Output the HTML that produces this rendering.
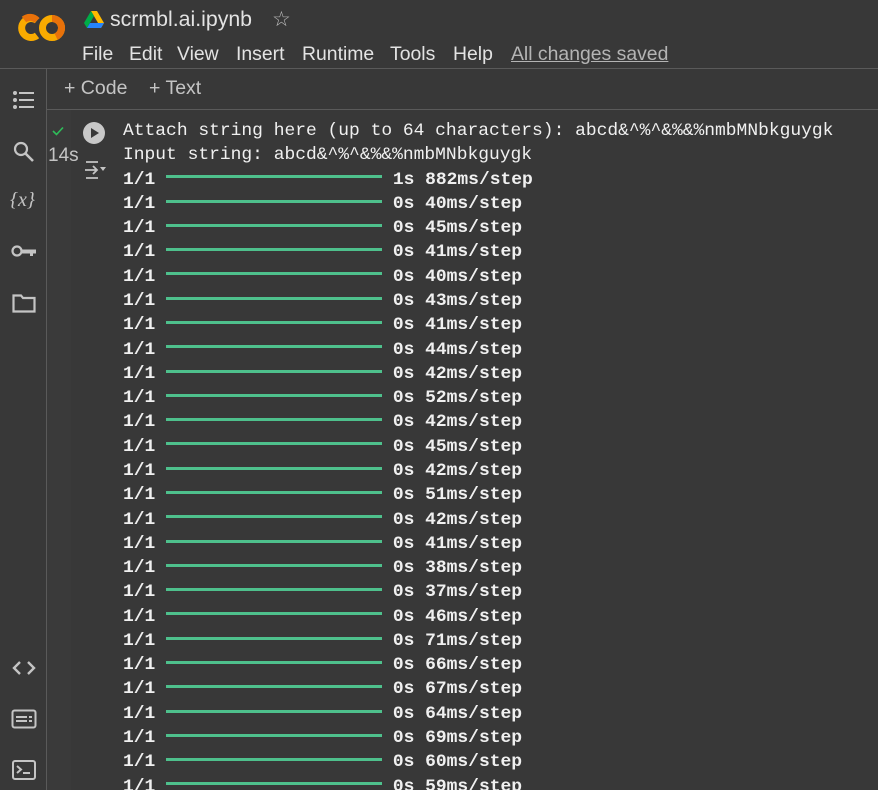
<!DOCTYPE html>
<html><head><meta charset="utf-8">
<style>
*{margin:0;padding:0;box-sizing:border-box}
html,body{width:878px;height:790px;overflow:hidden}
body{background:#383838;font-family:"Liberation Sans",sans-serif;color:#e3e3e3;position:relative}
.abs{position:absolute}
.hline{position:absolute;height:1px;background:#5a5a5a}
.menu span{position:absolute;top:43px;font-size:19.4px;color:#e3e3e3}
.out{position:absolute;left:123px;top:119px;font-family:"Liberation Mono",monospace;font-size:17.95px;line-height:24.28px;color:#f0f0f0;white-space:pre}
.out b{font-weight:bold}
.bar{display:inline-block;width:216px;height:3px;background:#4ec08c;vertical-align:middle;position:relative;top:-2px}
svg{position:absolute}
</style></head><body>
<svg style="left:15px;top:12px" width="52" height="32" viewBox="0 0 52 32">
<path d="M22 8.5 A9.5 9.5 0 1 0 22 23.5" stroke="#f9ab00" stroke-width="7" fill="none"/>
<path d="M22 8.5 A9.5 9.5 0 0 0 9 7.5" stroke="#e8710a" stroke-width="7" fill="none"/>
<circle cx="37" cy="16" r="9.5" stroke="#f9ab00" stroke-width="7" fill="none"/>
<path d="M37 6.5 A9.5 9.5 0 0 1 46.5 16 A9.5 9.5 0 0 1 41 24.5" stroke="#e8710a" stroke-width="7" fill="none"/>
</svg>
<svg style="left:84px;top:11px" width="20" height="18" viewBox="0 0 20 18">
<polygon points="7,0 13,0 20,12 17,17" fill="#ffba00"/>
<polygon points="7,0 0,12 3,17 10,5" fill="#00ac47"/>
<polygon points="3,17 17,17 20,12 6,12" fill="#2684fc"/>
</svg>
<div class="abs" style="left:110px;top:7px;font-size:21.3px;color:#e3e3e3">scrmbl.ai.ipynb</div>
<div class="abs" style="left:272px;top:7px;font-size:21px;color:#bbb">☆</div>
<div class="menu">
<span style="left:82px">File</span><span style="left:129px">Edit</span><span style="left:177px">View</span><span style="left:236px">Insert</span><span style="left:302px">Runtime</span><span style="left:390px">Tools</span><span style="left:453px">Help</span>
<span style="left:511px;color:#b4b4b4;text-decoration:underline">All changes saved</span>
</div>
<div class="hline" style="left:0;top:68px;width:878px"></div>
<div class="abs" style="left:46px;top:68px;width:1px;height:722px;background:#5a5a5a"></div>
<div class="hline" style="left:47px;top:109px;width:831px"></div>
<div class="abs" style="left:47px;top:110px;width:24px;height:680px;background:#3a3a3a"></div>
<div class="abs" style="left:64px;top:77px;font-size:19.5px;color:#c4c4c4">+ Code</div>
<div class="abs" style="left:149px;top:77px;font-size:19.5px;color:#c4c4c4">+ Text</div>
<svg style="left:12px;top:90px" width="24" height="20" viewBox="0 0 24 20" fill="#c4c4c4">
<circle cx="3" cy="3" r="2"/><circle cx="3" cy="10" r="2"/><circle cx="3" cy="17" r="2"/>
<rect x="7" y="2" width="15" height="2"/><rect x="7" y="9" width="15" height="2"/><rect x="7" y="16" width="15" height="2"/></svg>
<svg style="left:12px;top:140px" width="24" height="24" viewBox="0 0 24 24"><circle cx="9" cy="9" r="6" stroke="#c4c4c4" stroke-width="2.2" fill="none"/><path d="M13.5 13.5L21 21" stroke="#c4c4c4" stroke-width="2.6"/></svg>
<div class="abs" style="left:10px;top:189px;font-family:'Liberation Serif',serif;font-style:italic;font-size:20px;color:#c4c4c4">{<i>x</i>}</div>
<svg style="left:11px;top:243px" width="26" height="16" viewBox="0 0 26 16"><circle cx="6" cy="8" r="4.5" stroke="#c4c4c4" stroke-width="2.2" fill="none"/><path d="M10.5 6.5H25V10.5H22V13H19V10.5H10.5" fill="#c4c4c4"/></svg>
<svg style="left:12px;top:293px" width="24" height="20" viewBox="0 0 24 20"><path d="M1.5 2.5H9L11 5H22.5V18.5H1.5Z" stroke="#c4c4c4" stroke-width="2.2" fill="none"/></svg>
<svg style="left:12px;top:660px" width="24" height="16" viewBox="0 0 24 16"><path d="M8 2L2 8L8 14M16 2L22 8L16 14" stroke="#c4c4c4" stroke-width="2.4" fill="none"/></svg>
<svg style="left:11px;top:709px" width="26" height="20" viewBox="0 0 26 20"><rect x="1.5" y="1.5" width="23" height="17" rx="2" stroke="#c4c4c4" stroke-width="2" fill="none"/><rect x="5" y="7" width="11" height="2" fill="#c4c4c4"/><rect x="18" y="7" width="3" height="2" fill="#c4c4c4"/><rect x="5" y="11" width="11" height="2" fill="#c4c4c4"/><rect x="18" y="11" width="3" height="2" fill="#c4c4c4"/></svg>
<svg style="left:12px;top:760px" width="24" height="20" viewBox="0 0 24 20"><rect x="1" y="1" width="22" height="18" rx="2" stroke="#c4c4c4" stroke-width="2" fill="none"/><path d="M5 6L9 9.5L5 13" stroke="#c4c4c4" stroke-width="2" fill="none"/><rect x="11" y="12" width="7" height="2" fill="#c4c4c4"/></svg>
<svg style="left:52px;top:126px" width="12" height="10" viewBox="0 0 12 10"><path d="M1 5L4.5 8.5L11 1.5" stroke="#2ebd59" stroke-width="1.6" fill="none"/></svg>
<div class="abs" style="left:48px;top:145px;font-size:19px;color:#c4c4c4">14s</div>
<svg style="left:82px;top:121px" width="24" height="24" viewBox="0 0 24 24"><circle cx="12" cy="12" r="11" fill="#c8c8c8"/><path d="M9 7L17 12L9 17Z" fill="#383838"/></svg>
<svg style="left:83px;top:160px" width="24" height="20" viewBox="0 0 24 20"><path d="M3 2H15M3 18H15M2 10H14M10 6L14 10L10 14" stroke="#c4c4c4" stroke-width="1.8" fill="none"/><path d="M17 7H23L20 11Z" fill="#c4c4c4"/></svg>
<div class="out">Attach string here (up to 64 characters): abcd&amp;^%^&amp;%&amp;%nmbMNbkguygk
Input string: abcd&amp;^%^&amp;%&amp;%nmbMNbkguygk
<b>1/1 <span class="bar"></span> 1s 882ms/step
1/1 <span class="bar"></span> 0s 40ms/step
1/1 <span class="bar"></span> 0s 45ms/step
1/1 <span class="bar"></span> 0s 41ms/step
1/1 <span class="bar"></span> 0s 40ms/step
1/1 <span class="bar"></span> 0s 43ms/step
1/1 <span class="bar"></span> 0s 41ms/step
1/1 <span class="bar"></span> 0s 44ms/step
1/1 <span class="bar"></span> 0s 42ms/step
1/1 <span class="bar"></span> 0s 52ms/step
1/1 <span class="bar"></span> 0s 42ms/step
1/1 <span class="bar"></span> 0s 45ms/step
1/1 <span class="bar"></span> 0s 42ms/step
1/1 <span class="bar"></span> 0s 51ms/step
1/1 <span class="bar"></span> 0s 42ms/step
1/1 <span class="bar"></span> 0s 41ms/step
1/1 <span class="bar"></span> 0s 38ms/step
1/1 <span class="bar"></span> 0s 37ms/step
1/1 <span class="bar"></span> 0s 46ms/step
1/1 <span class="bar"></span> 0s 71ms/step
1/1 <span class="bar"></span> 0s 66ms/step
1/1 <span class="bar"></span> 0s 67ms/step
1/1 <span class="bar"></span> 0s 64ms/step
1/1 <span class="bar"></span> 0s 69ms/step
1/1 <span class="bar"></span> 0s 60ms/step
1/1 <span class="bar"></span> 0s 59ms/step</b></div>
</body></html>
